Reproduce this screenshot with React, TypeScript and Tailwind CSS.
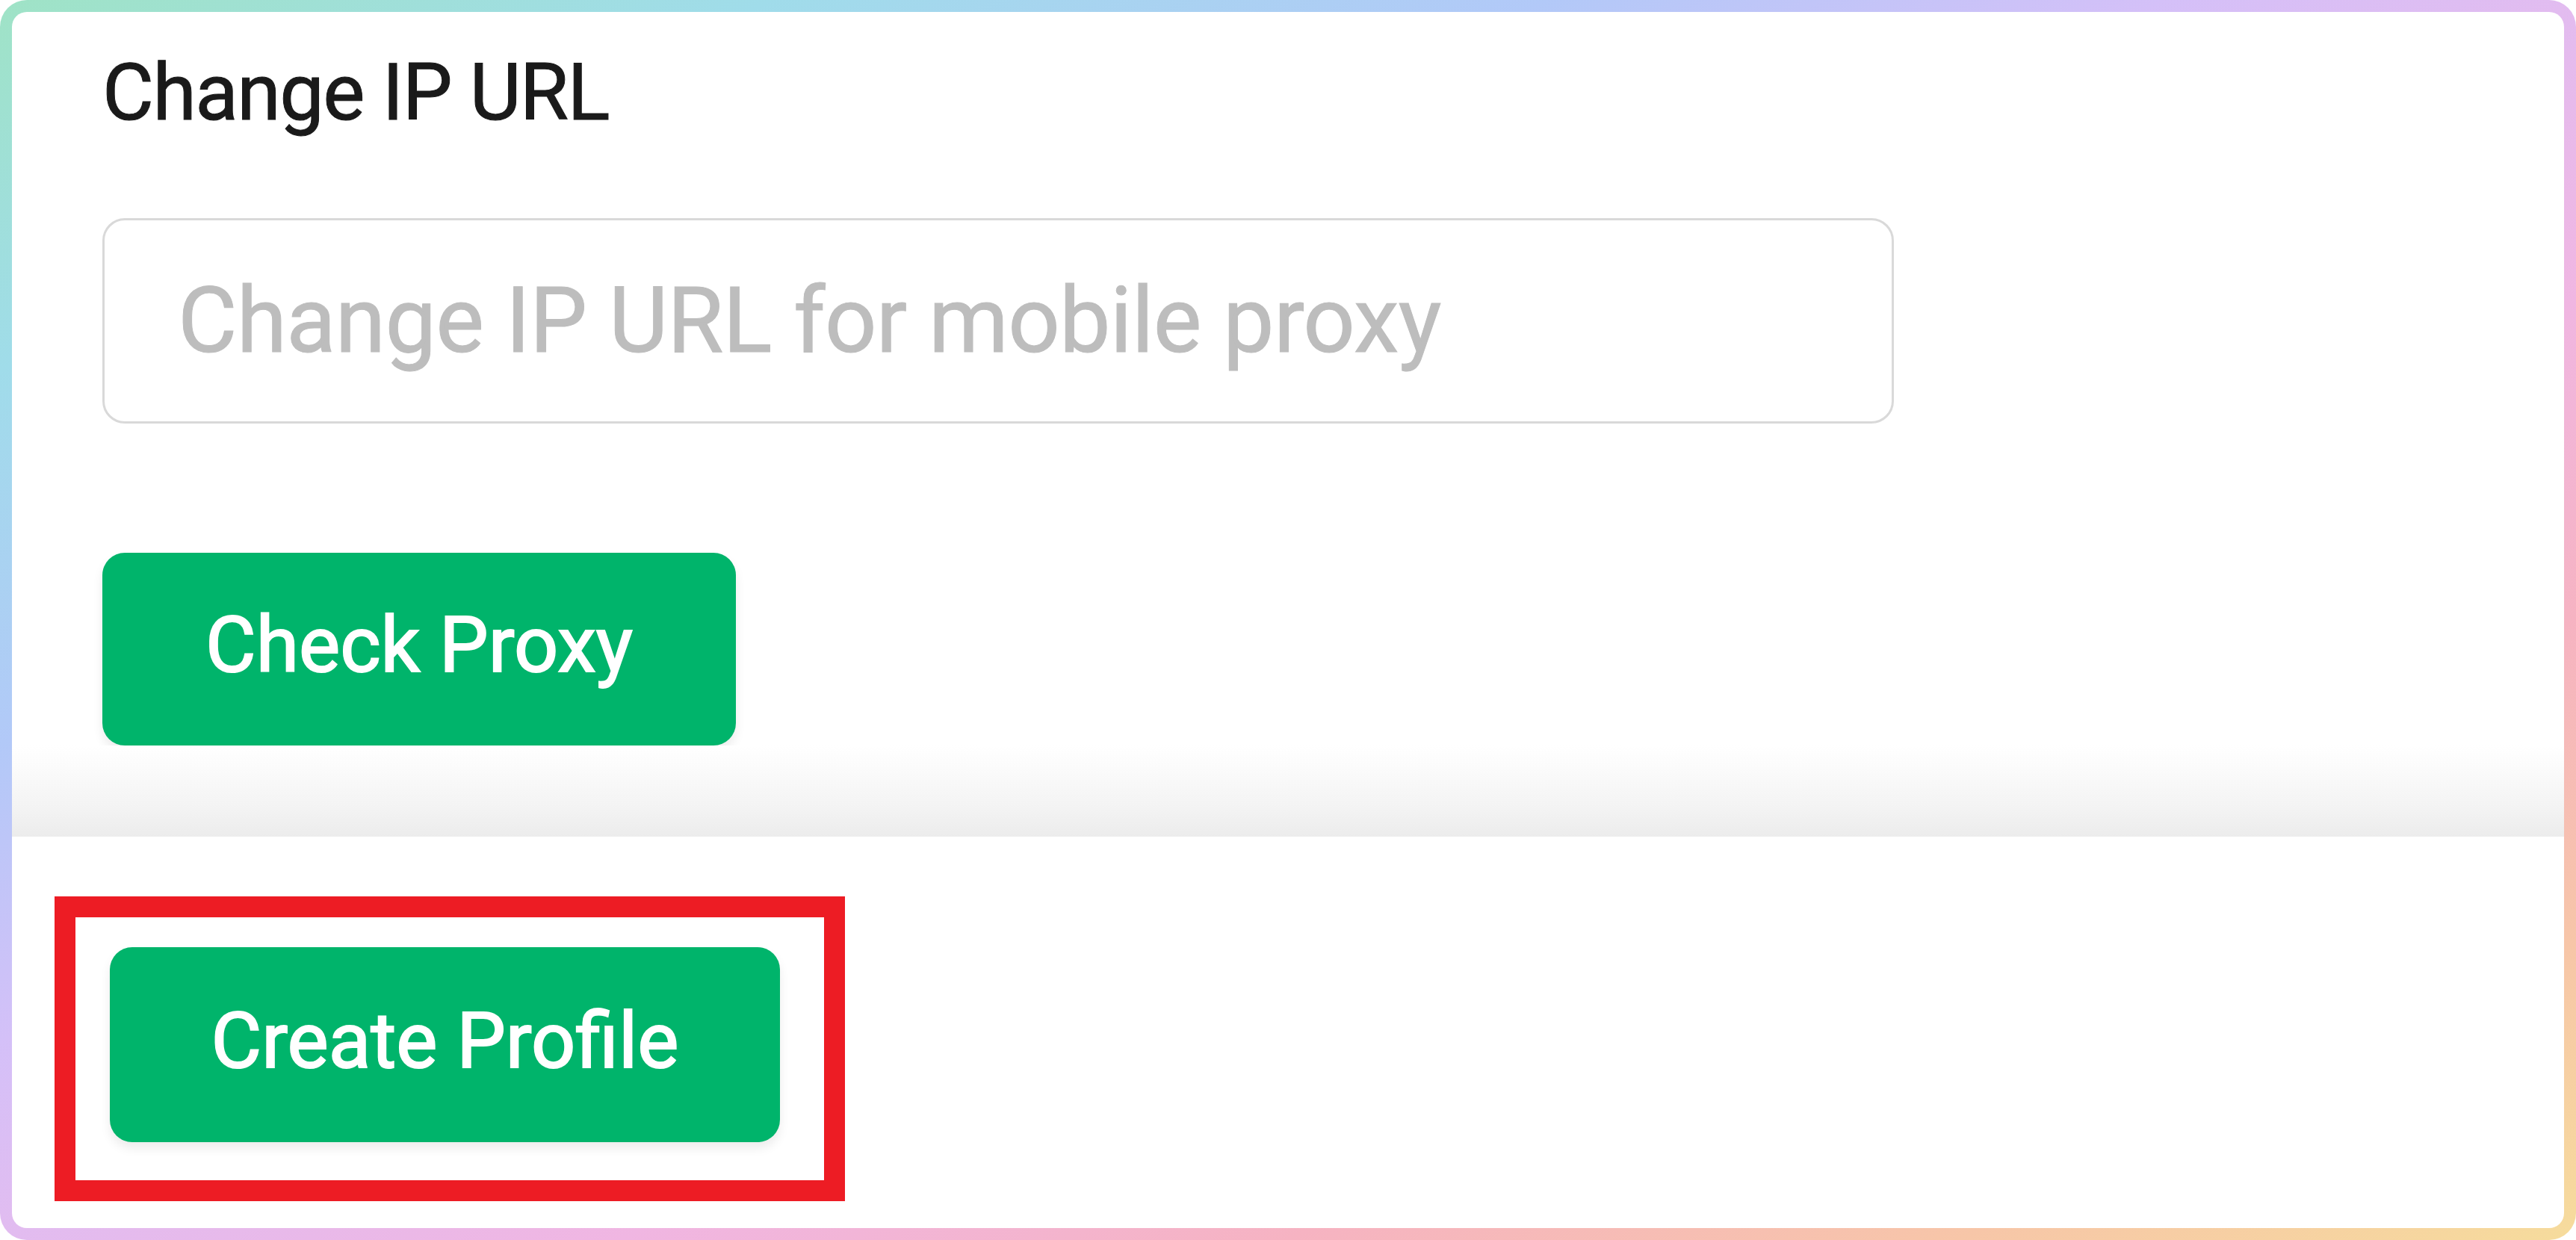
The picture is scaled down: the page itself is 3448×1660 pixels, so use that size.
import React from "react";

export default function App() {
  return (
    <div className="w-[3448px] h-[1660px] rounded-[36px] p-[16px] bg-[linear-gradient(to_bottom_right,#9fe3c6_0%,#a0dcea_15%,#b2c9f8_30%,#d4c0f8_42%,#e2bcf0_50%,#f0b6e2_62%,#f6b3c2_75%,#f7c6a8_88%,#f6dc9c_100%)] font-[Roboto,sans-serif]">
      <div className="w-full h-full rounded-[20px] bg-white overflow-hidden flex flex-col">
        <div className="flex flex-col items-start pl-[121px] pt-[55px]">
          <div className="text-[106px] leading-none tracking-[-0.015em] text-[#1a1a1a] [-webkit-text-stroke:1px_#1a1a1a]">Change IP URL</div>
          <input
            className="mt-[115px] w-[2398px] h-[275px] border-[3px] border-[#d9d9d9] rounded-[30px] pl-[98px] text-[122px] tracking-[-0.006em] text-[#333] placeholder:text-[#bdbdbd] outline-none bg-white font-[Roboto,sans-serif] [-webkit-text-stroke:1px_#bdbdbd]"
            placeholder="Change IP URL for mobile proxy"
          />
          <button className="mt-[173px] w-[848px] h-[258px] rounded-[30px] bg-[#00b46b] text-white text-[104px] font-normal leading-none pb-[10px] flex items-center justify-center shadow-[0_8px_14px_rgba(0,0,0,0.08)] font-[Roboto,sans-serif] [-webkit-text-stroke:2px_white]">
            Check Proxy
          </button>
        </div>
        <div className="h-[122px] shrink-0 bg-[linear-gradient(to_bottom,#ffffff_0%,#fbfbfb_25%,#f4f4f4_65%,#ececec_100%)]" />
        <div className="flex flex-col items-start pl-[57px] pt-[80px]">
          <div className="border-[28px] border-[#ed1c24] pl-[46px] pt-[40px] pr-[59px] pb-[51px]">
            <button className="w-[897px] h-[261px] rounded-[30px] bg-[#00b46b] text-white text-[104px] font-normal leading-none pb-[10px] flex items-center justify-center shadow-[0_8px_14px_rgba(0,0,0,0.08)] font-[Roboto,sans-serif] [-webkit-text-stroke:2px_white]">
              Create Profile
            </button>
          </div>
        </div>
      </div>
    </div>
  );
}
